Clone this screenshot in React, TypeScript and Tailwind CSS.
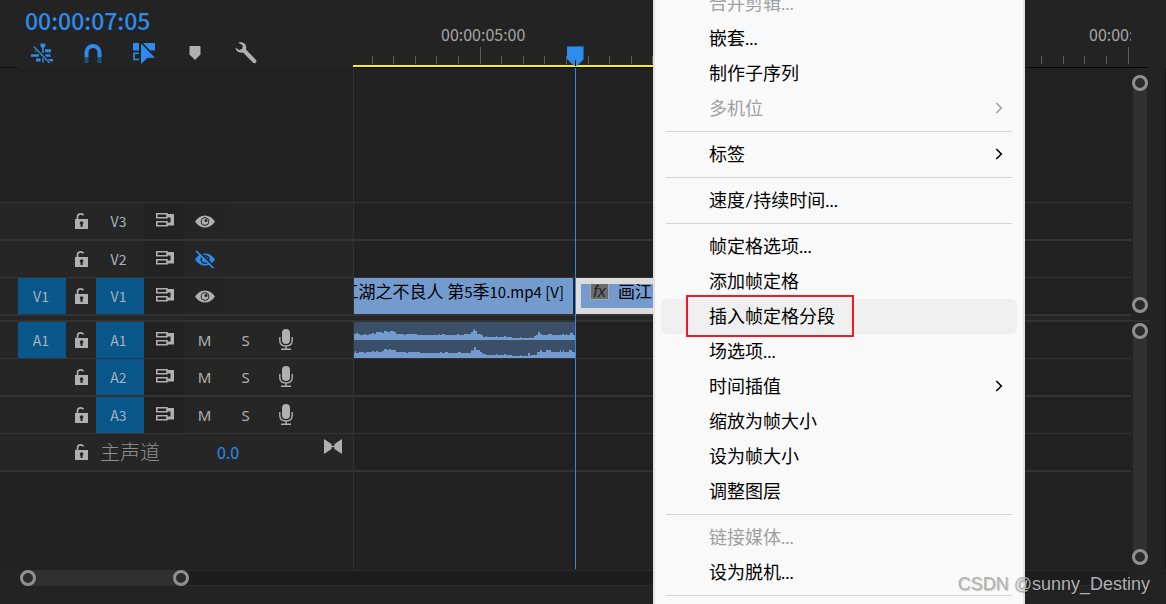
import type { ReactNode } from "react"

type IconProps = { className?: string }

type MenuEntry =
  | { kind: "separator" }
  | { kind: "item"; label: string; disabled?: boolean; submenu?: boolean; active?: boolean }

const menuEntries: MenuEntry[] = [
  { kind: "item", label: "合并剪辑...", disabled: true },
  { kind: "item", label: "嵌套..." },
  { kind: "item", label: "制作子序列" },
  { kind: "item", label: "多机位", disabled: true, submenu: true },
  { kind: "separator" },
  { kind: "item", label: "标签", submenu: true },
  { kind: "separator" },
  { kind: "item", label: "速度/持续时间..." },
  { kind: "separator" },
  { kind: "item", label: "帧定格选项..." },
  { kind: "item", label: "添加帧定格" },
  { kind: "item", label: "插入帧定格分段", active: true },
  { kind: "item", label: "场选项..." },
  { kind: "item", label: "时间插值", submenu: true },
  { kind: "item", label: "缩放为帧大小" },
  { kind: "item", label: "设为帧大小" },
  { kind: "item", label: "调整图层" },
  { kind: "separator" },
  { kind: "item", label: "链接媒体...", disabled: true },
  { kind: "item", label: "设为脱机..." },
  { kind: "separator" },
]

// [x, level] steps, each level holds until the next x
const waveTop: [number, number][] = [
  [0, 6], [2, 7], [4, 6], [6, 5], [10, 6], [12, 5], [15, 6], [18, 7], [20, 6], [22, 8], [28, 7], [30, 9], [33, 8], [36, 9],
  [40, 8], [42, 6], [50, 5], [52, 6], [63, 5], [75, 5], [85, 6], [86, 5], [88, 6], [91, 5], [103, 6], [105, 5], [110, 6],
  [117, 8], [119, 10], [120, 11], [121, 9], [123, 6], [127, 5], [129, 3], [132, 4], [133, 3], [142, 4], [143, 3], [150, 4],
  [152, 3], [158, 2], [166, 3], [167, 2], [176, 3], [177, 2], [180, 4], [182, 5], [184, 8], [186, 6], [188, 5], [194, 6],
  [198, 5], [208, 6], [210, 5], [212, 6], [213, 5], [216, 7], [219, 5], [222, 5],
]

const waveBottom: [number, number][] = [
  [0, 5], [1, 7], [2, 5], [5, 6], [10, 5], [12, 6], [18, 7], [20, 6], [22, 7], [24, 6], [28, 7], [30, 9], [33, 8], [35, 9],
  [37, 8], [42, 6], [52, 5], [54, 6], [66, 5], [86, 6], [88, 5], [91, 6], [94, 5], [104, 6], [107, 5], [117, 8], [119, 7],
  [120, 11], [122, 8], [126, 6], [128, 5], [129, 4], [132, 3], [142, 4], [143, 3], [150, 4], [152, 3], [158, 2], [166, 3],
  [167, 2], [174, 5], [176, 2], [177, 3], [183, 6], [186, 8], [188, 6], [192, 8], [197, 6], [206, 8], [207, 6], [209, 8],
  [210, 6], [215, 8], [218, 6], [222, 6],
]

function wavePath(levels: [number, number][], floor: number) {
  const steps = levels.map(([x, level]) => `H${x}V${floor - level}`).join("")
  return `M0 ${floor}${steps}V${floor}Z`
}

function LockIcon() {
  return (
    <svg width="13" height="16" viewBox="0 0 13 16">
      <path d="M2.5 6.5V4.2C2.5 2 4 .9 5.800 .9c1.200 0 2.100 .4 2.700 1.300" fill="none" stroke="#b0b0b0" strokeWidth="1.700" />
      <path d="M0 6h13v10H0z" fill="#b0b0b0" />
      <path d="M6.500 8.200a1.900 1.900 0 0 1 1.100 3.400V14H5.500v-2.400A1.900 1.900 0 0 1 6.500 8.200Z" fill="#262626" />
    </svg>
  )
}

function SyncLockIcon() {
  return (
    <svg width="18" height="14" viewBox="0 0 18 14" fill="none" stroke="#b0b0b0">
      <path d="M.8 .8H11v4H.8zM.8 8.800H11v4H.8z" strokeWidth="1.600" />
      <path d="M11 1h7v11.500h-7V9.500h3.500V4.500H11z" fill="#b0b0b0" stroke="none" />
    </svg>
  )
}

function EyeIcon() {
  return (
    <svg width="20" height="13" viewBox="0 0 20 13">
      <path d="M0 6.500C2.800 2.500 6 .5 10 .5s7.200 2 10 6c-2.800 4-6 6-10 6s-7.200-2-10-6Z" fill="#b0b0b0" />
      <circle cx="10" cy="6.500" r="4.300" fill="#262626" />
      <circle cx="10" cy="6.500" r="3.300" fill="#b0b0b0" />
      <circle cx="11" cy="5.500" r="1.500" fill="#262626" />
    </svg>
  )
}

function EyeOffIcon() {
  return (
    <svg width="20" height="19" viewBox="0 0 20 19">
      <path d="M0 9.500c2.800-4 6-6 10-6s7.200 2 10 6c-2.800 4-6 6-10 6s-7.200-2-10-6Z" fill="#2d8ceb" />
      <circle cx="10" cy="9.500" r="4.600" fill="#262626" />
      <circle cx="10" cy="9.500" r="3.100" fill="#2d8ceb" />
      <path d="M2.500 0 20 17.500" stroke="#262626" strokeWidth="2" />
      <path d="m1 .8 17.500 17.400" stroke="#2d8ceb" strokeWidth="1.700" />
    </svg>
  )
}

function MicIcon() {
  return (
    <svg width="14" height="21" viewBox="0 0 14 21">
      <rect x="3" y="0" width="8" height="15" rx="4" fill="#b0b0b0" />
      <path d="M.8 8v3.500c0 3.500 2.400 5.500 6.200 5.500s6.200-2 6.200-5.500V8M7 17v3M2 20.200h10" fill="none" stroke="#b0b0b0" strokeWidth="1.400" />
    </svg>
  )
}

function BowtieIcon() {
  return (
    <svg width="18" height="15" viewBox="0 0 18 15" fill="#b0b0b0">
      <path d="M0 0 7.500 5v5L0 15zM18 0l-7.500 5v5l7.500 5z" />
      <path d="M7 6.800h4v1.400H7z" />
    </svg>
  )
}

function NestIcon() {
  return (
    <svg width="22" height="21" viewBox="0 0 22 21" fill="#2d8ceb">
      <path d="M9.500 .5h4.800v3l-1.500 1.500v5h-1.600V5L9.500 3.500zM14 6.300h6v3h-6zM4 6.300h3v2.500H4zM0 11.300h8v2.500H0zM14.500 11.300h5v2.500h-5zM5 15.500h4.500v3H5zM11.200 13.500h1.500v6h-1.500zM16.500 16h5.500v2.500h-5.500z" />
      <path d="M2.700 3.500 18.700 20" stroke="#232323" strokeWidth="3" />
      <path d="M2.700 3.500 18.700 20" stroke="#2d8ceb" strokeWidth="1.400" />
    </svg>
  )
}

function MagnetIcon() {
  return (
    <svg width="18" height="19" viewBox="0 0 18 19" fill="none" strokeWidth="4">
      <path d="M2.500 13V8.500a6.500 6.500 0 0 1 13 0V13" stroke="#2d8ceb" />
      <path d="M2.500 13V19M15.500 13V19" stroke="#1d5080" />
    </svg>
  )
}

function LinkedSelectionIcon() {
  return (
    <svg width="22" height="21" viewBox="0 0 22 21" fill="#2d8ceb">
      <path d="M0 0h6v7.500H0zM10 0h12v7.500h-5z" />
      <path d="M6 10.300H1v6.200h5" fill="none" stroke="#2d8ceb" strokeWidth="1.600" />
      <path d="M8 .5 22 14.800h-7.500L8 21z" />
      <path d="M9.500 .5 17 8" fill="none" stroke="#232323" strokeWidth=".9" />
    </svg>
  )
}

function MarkerIcon() {
  return (
    <svg width="12" height="14" viewBox="0 0 12 14">
      <path d="M1.500 0h9Q11.500 0 11.500 1v7.500L6 14 .5 8.500V1Q.5 0 1.500 0Z" fill="#b0b0b0" />
    </svg>
  )
}

function WrenchIcon() {
  return (
    <svg width="22" height="22" viewBox="0 0 22 22">
      <path
        d="M3.200 .8C6.500-.4 10 1 11 4c.4 1.300 .3 2.500 0 3.500l9.800 10.200c.9 1 .8 2.200 0 3-.9 .8-2.100 .8-3-.1L8 10.500C4.500 11.300 .9 9.300 .4 5.500L4 8l3.300-1.200 .5-3.500z"
        fill="#b0b0b0"
      />
    </svg>
  )
}

function ChevronIcon({ className }: IconProps) {
  return (
    <svg className={className} width="8" height="12" viewBox="0 0 8 12" fill="none" stroke="currentColor" strokeWidth="1.600">
      <path d="m1.300 1 5 5-5 5" />
    </svg>
  )
}

const tools = [
  { label: "将序列作为嵌套插入", icon: <NestIcon /> },
  { label: "对齐", icon: <MagnetIcon /> },
  { label: "链接选择项", icon: <LinkedSelectionIcon /> },
  { label: "添加标记", icon: <MarkerIcon /> },
  { label: "时间轴显示设置", icon: <WrenchIcon /> },
]

// minor ticks come at 21.6px, one in thirty is major
const ticks = Array.from({ length: 60 }, (_, i) => i - 5)

function Ruler() {
  return (
    <div className="min-w-0 flex-1">
      <div className="relative mr-[35px] h-[67px]">
        <div className="flex h-[65px] overflow-hidden pl-[88px] pt-[22px] text-base leading-6 text-[#a6a6a6]">
          <span className="w-[648px] shrink-0">00:00:05:00</span>
          <span className="w-[648px] shrink-0">00:00:10:00</span>
        </div>
        <svg className="absolute left-0 top-[47px] h-[17px] w-full" shapeRendering="crispEdges" fill="#5c5c5c">
          {ticks.map((i) => {
            const major = i % 30 === 0
            return <rect key={i} x={Math.floor(127 + i * 21.6)} y={major ? 0 : 9} width="1" height={major ? 17 : 8} />
          })}
        </svg>
        <div className="h-[2px] w-[400px] bg-[#f5f100]" />
        <svg className="absolute left-[214px] top-[46px]" width="17" height="20" viewBox="0 0 17 20">
          <path d="M0 0h17v13l-6.500 6.500h-4L0 13z" fill="#2d8ceb" />
          <path d="M0 .5h17M16.500 0v13" stroke="#1f5f9f" />
          <path d="M8.500 14v6" stroke="#0b0b0b" />
        </svg>
      </div>
      <div className="mr-[18px] h-px bg-[#080808]" />
    </div>
  )
}

function Cell({ label, className, children }: { label: string; className: string; children: ReactNode }) {
  return (
    <button type="button" aria-label={label} className={`flex h-9 shrink-0 items-center justify-center ${className}`}>
      {children}
    </button>
  )
}

type TrackProps = {
  name: string
  audio?: boolean
  source?: boolean
  targeted?: boolean
  hidden?: boolean
  line: string
  children?: ReactNode
}

function Track({ name, audio, source, targeted, hidden, line, children }: TrackProps) {
  return (
    <div className={`flex border-[#333333] ${line}`}>
      <div className="flex w-[353px] shrink-0 bg-[#262626] pl-[18px] text-sm text-[#a9b4bc]">
        {source ? (
          <Cell label={`源 ${name}`} className="w-12 bg-[#08568a] pr-[2px]">
            {name}
          </Cell>
        ) : (
          <div className="w-12" />
        )}
        <Cell label={`锁定 ${name}`} className="w-[30px] pb-px pl-px">
          <LockIcon />
        </Cell>
        <Cell label={`目标 ${name}`} className={targeted ? "w-12 bg-[#08568a] pr-[3px]" : "w-12 pr-[3px]"}>
          {name}
        </Cell>
        <Cell label={`同步锁定 ${name}`} className="w-10 bg-[#222222] pb-[2px] pl-[2px]">
          <SyncLockIcon />
        </Cell>
        {audio ? (
          <>
            <Cell label={`静音 ${name}`} className="w-[41px] pt-px font-['Noto_Sans',sans-serif] text-[15px] text-[#b0b0b0]">
              M
            </Cell>
            <Cell label={`独奏 ${name}`} className="w-[41px] pt-px font-['Noto_Sans',sans-serif] text-[15px] text-[#b0b0b0]">
              S
            </Cell>
            <Cell label={`画外音 ${name}`} className="w-10 pb-px">
              <MicIcon />
            </Cell>
          </>
        ) : (
          <Cell label={`切换 ${name} 输出`} className={hidden ? "w-[41px] pl-px" : "w-[41px] bg-[#242424] pl-px pt-px"}>
            {hidden ? <EyeOffIcon /> : <EyeIcon />}
          </Cell>
        )}
      </div>
      <div className="flex h-9 min-w-0 flex-1 overflow-hidden border-l border-[#333333] bg-[#212121]">{children}</div>
    </div>
  )
}

function Handle({ label }: { label: string }) {
  return <button type="button" aria-label={label} className="-mx-px size-4 shrink-0 rounded-full border-3 border-[#909090] bg-[#2b2b2b]" />
}

function VerticalZoom({ label, className }: { label: string; className: string }) {
  return (
    <div className={`ml-[2px] flex w-[14px] flex-col justify-between rounded-full bg-[#303030] ${className}`}>
      <Handle label={`${label} 上`} />
      <Handle label={`${label} 下`} />
    </div>
  )
}

function ContextMenu() {
  return (
    <div
      role="menu"
      className="absolute -bottom-1 -top-[14px] left-[653px] w-[372px] border-x-2 border-[#e2e2e2] bg-[#f9f9f9] px-[6px] font-[Lato,'Noto_Sans_CJK_SC',sans-serif] text-lg text-black"
    >
      {menuEntries.map((entry, index) => {
        if (entry.kind === "separator") {
          return <hr key={index} className="mx-[5px] my-[5px] border-t border-[#d4d4d4]" />
        }
        return (
          <button
            key={index}
            type="button"
            role="menuitem"
            disabled={entry.disabled}
            className={`relative flex h-[35px] w-full items-center justify-between rounded-md pb-[2px] pl-12 pr-[14px] leading-6 disabled:text-[#a0a0a0] ${
              entry.active ? "bg-[#efefef]" : ""
            }`}
          >
            {entry.label}
            {entry.submenu && <ChevronIcon />}
            {entry.active && <span className="absolute -top-1 left-[25px] h-[42px] w-[168px] border-2 border-[#ed1c24]" />}
          </button>
        )
      })}
    </div>
  )
}

export default function App() {
  return (
    <div className="relative flex h-screen min-h-[560px] flex-col overflow-hidden bg-[#232323] font-['Noto_Sans_CJK_SC',sans-serif] text-[#a6a6a6]">
      <header className="flex h-[68px] shrink-0">
        <div className="flex w-[353px] shrink-0 flex-col justify-between">
          <div>
            <div className="pl-[25px] pt-2 text-[23px] leading-6 font-medium text-[#2d8ceb]">00:00:07:05</div>
            <div className="mt-[10px] flex pl-4">
              {tools.map((tool) => (
                <button key={tool.label} type="button" aria-label={tool.label} className="flex h-[22px] w-[51px] items-center justify-center">
                  {tool.icon}
                </button>
              ))}
            </div>
          </div>
          <div className="h-px w-[18px] bg-[#111111]" />
        </div>
        <Ruler />
      </header>

      <main className="flex min-h-0 flex-1">
        <div className="relative flex min-w-0 flex-1 flex-col bg-[#212121]">
          <div className="flex h-[135px] shrink-0 border-b border-[#333333] pl-[353px]">
            <div className="border-l border-[#333333]" />
          </div>
          <Track name="V3" line="border-b-2" />
          <Track name="V2" hidden line="border-b" />
          <Track name="V1" source targeted line="border-b-2">
            <div className="flex w-[219px] shrink-0 items-baseline justify-end overflow-hidden whitespace-pre bg-[#739bce] pr-[9px] text-[17px] leading-[26px] text-black">
              <span>画江湖之不良人 第</span>
              <span className="text-[15px]">5</span>
              <span>季</span>
              <span className="text-[15px]">10.mp4 [V]</span>
            </div>
            <div className="ml-[3px] flex w-[260px] shrink-0 items-start overflow-hidden whitespace-nowrap border-y-6 border-l-5 border-[#dcdcdc] bg-[#739bce] pl-[9px] text-[17px] text-black">
              <span className="-mt-px flex h-[17px] w-[19px] shrink-0 items-center justify-center border border-[#a3a8ae] bg-[#6b6b6b] font-['Liberation_Sans',sans-serif] text-base italic leading-4 text-[#222222]">
                fx
              </span>
              <span className="-mt-px ml-[9px] leading-4">画江湖</span>
            </div>
          </Track>
          <div className="h-[6px] shrink-0 border-b-2 border-[#333333] bg-[#262626]" />
          <Track name="A1" audio source targeted line="border-b">
            <svg className="shrink-0 bg-[#3c4f68]" width="222" height="36" viewBox="0 0 222 36" shapeRendering="crispEdges" fill="#739bce">
              <path d={wavePath(waveTop, 18)} />
              <path d={wavePath(waveBottom, 36)} />
            </svg>
          </Track>
          <Track name="A2" audio targeted line="border-b-2" />
          <Track name="A3" audio targeted line="border-b" />
          <div className="flex border-b-2 border-[#333333]">
            <div className="flex w-[353px] shrink-0 bg-[#262626] pl-[66px]">
              <Cell label="锁定主声道" className="w-[30px] pl-px">
                <LockIcon />
              </Cell>
              <span className="ml-1 w-[117px] text-xl leading-9 font-light text-[#8f8f8f]">主声道</span>
              <button type="button" aria-label="主声道音量" className="text-base text-[#2d8ceb]">
                0.0
              </button>
              <Cell label="折叠主声道" className="ml-auto mr-[11px] w-[18px] pb-3">
                <BowtieIcon />
              </Cell>
            </div>
            <div className="flex-1 border-l border-[#333333]" />
          </div>
          <div className="flex flex-1 pl-[353px]">
            <div className="border-l border-[#333333]" />
          </div>
          <div className="absolute inset-y-0 left-[575px] w-px bg-[#2d8ceb]" />
        </div>

        <div className="flex w-[35px] shrink-0 flex-col border-r border-[#151515]">
          <VerticalZoom label="视频轨道缩放" className="mt-[7px] h-[238px]" />
          <div className="mr-4 mt-[7px] h-[2px] bg-[#2e2e2e]" />
          <VerticalZoom label="音频轨道缩放" className="mb-1 mt-px flex-1" />
        </div>
      </main>

      <footer className="h-[35px] shrink-0 pl-5 pr-[35px] pt-px">
        <div className="flex h-4 items-center rounded-full border-y border-[#2b2b2b] bg-[#1d1d1d]">
          <div className="flex h-4 w-[169px] items-center justify-between rounded-full bg-[#303030] px-px">
            <Handle label="时间轴缩放 左" />
            <Handle label="时间轴缩放 右" />
          </div>
        </div>
      </footer>

      <ContextMenu />

      <div className="absolute bottom-2 right-4 font-['Liberation_Sans',sans-serif] text-lg leading-6 text-[#b0b0b0] [text-shadow:1px_1px_1px_rgba(0,0,0,0.2)]">
        CSDN @sunny_Destiny
      </div>
    </div>
  )
}
